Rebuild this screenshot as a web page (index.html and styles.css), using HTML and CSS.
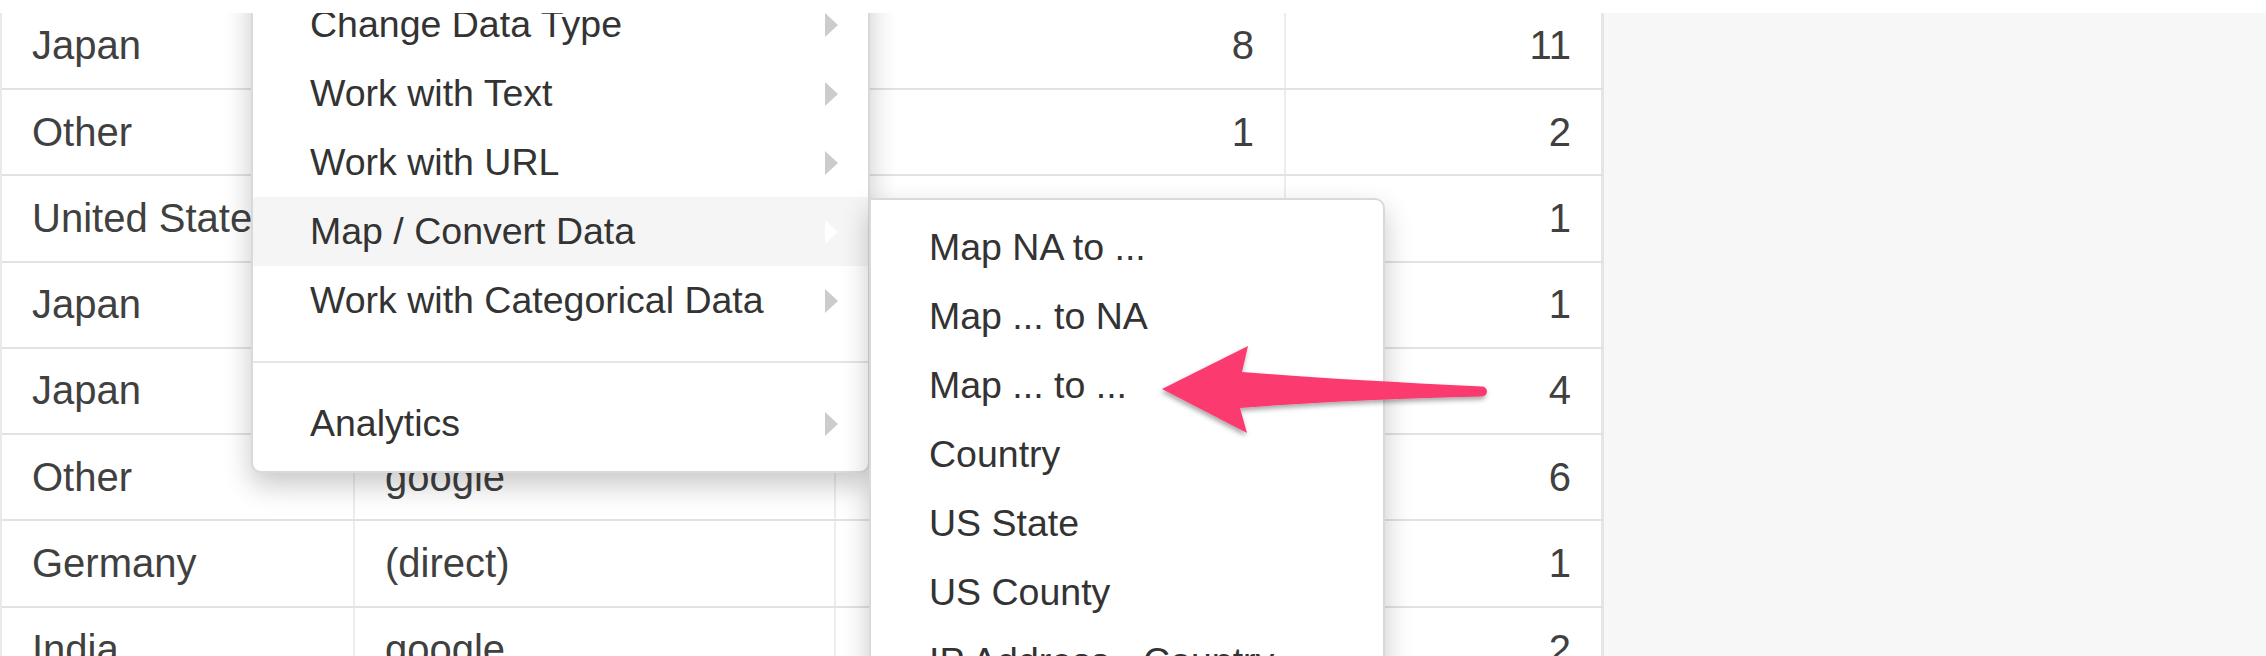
FILE: index.html
```html
<!DOCTYPE html>
<html>
<head>
<meta charset="utf-8">
<link rel="stylesheet" href="styles.css">
</head>
<body>
<div class="topbar"></div>
<div class="viewport">
  <div class="grid">
    <div class="row"><div class="cell">Japan</div><div class="cell"></div><div class="cell num">8</div><div class="cell num last">11</div></div>
    <div class="row"><div class="cell">Other</div><div class="cell"></div><div class="cell num">1</div><div class="cell num last">2</div></div>
    <div class="row"><div class="cell">United States</div><div class="cell"></div><div class="cell num"></div><div class="cell num last">1</div></div>
    <div class="row"><div class="cell">Japan</div><div class="cell"></div><div class="cell num"></div><div class="cell num last">1</div></div>
    <div class="row"><div class="cell">Japan</div><div class="cell"></div><div class="cell num"></div><div class="cell num last">4</div></div>
    <div class="row"><div class="cell">Other</div><div class="cell">google</div><div class="cell num"></div><div class="cell num last">6</div></div>
    <div class="row"><div class="cell">Germany</div><div class="cell">(direct)</div><div class="cell num"></div><div class="cell num last">1</div></div>
    <div class="row"><div class="cell">India</div><div class="cell">google</div><div class="cell num"></div><div class="cell num last">2</div></div>
  </div>

  <div class="menu main-menu">
    <div class="item"><span>Change Data Type</span><i class="caret"></i></div>
    <div class="item"><span>Work with Text</span><i class="caret"></i></div>
    <div class="item"><span>Work with URL</span><i class="caret"></i></div>
    <div class="item active"><span>Map / Convert Data</span><i class="caret"></i></div>
    <div class="item"><span>Work with Categorical Data</span><i class="caret"></i></div>
    <div class="divider"></div>
    <div class="item"><span>Analytics</span><i class="caret"></i></div>
  </div>

  <div class="menu submenu">
    <div class="item">Map NA to ...</div>
    <div class="item">Map ... to NA</div>
    <div class="item">Map ... to ...</div>
    <div class="item">Country</div>
    <div class="item">US State</div>
    <div class="item">US County</div>
    <div class="item">IP Address - Country</div>
  </div>

  <svg class="arrow" width="380" height="140" viewBox="0 0 380 140">
    <defs>
      <filter id="sh" x="-20%" y="-40%" width="140%" height="180%">
        <feDropShadow dx="-1" dy="3" stdDeviation="2.5" flood-color="#000" flood-opacity="0.35"/>
      </filter>
    </defs>
    <path filter="url(#sh)" fill="#fb3a70" d="M22 69 L108 26 L102 52 Q200 60 342 66.5 A5 5 0 0 1 342 76.5 Q200 80 100 88 L107 113 Z"/>
  </svg>
</div>
</body>
</html>
```
FILE: styles.css
```css
html, body {
  margin: 0;
  padding: 0;
  background: #ffffff;
}
body {
  font-family: "Liberation Sans", Arial, sans-serif;
  color: #333333;
}
.topbar {
  height: 13px;
  background: #ffffff;
}
.viewport {
  position: relative;
  height: 643px;
  overflow: hidden;
  background: #f7f7f7;
}
.grid {
  width: 1604px;
  margin-top: -9.25px;
  background: #ffffff;
  border-left: 2px solid #e9e9e9;
  box-sizing: border-box;
}
.row {
  display: grid;
  grid-template-columns: 353px 481px 450px 318px;
  height: 86.25px;
  border-bottom: 2px solid #e2e2e2;
  box-sizing: border-box;
}
.cell {
  display: flex;
  align-items: center;
  padding: 0 30px;
  border-right: 2px solid #ededed;
  box-sizing: border-box;
  font-size: 40px;
  color: #404040;
  white-space: nowrap;
  overflow: hidden;
}
.cell.num {
  justify-content: flex-end;
}
.cell.last {
  border-right: 3px solid #e6e6e6;
}
.menu {
  position: absolute;
  background: #ffffff;
  border: 2px solid rgba(0, 0, 0, 0.15);
  box-shadow: 0 12px 28px rgba(0, 0, 0, 0.22);
  box-sizing: border-box;
  font-size: 37.5px;
  color: #333333;
}
.main-menu {
  left: 251px;
  top: -38px;
  width: 619px;
  padding: 13px 0;
  border-radius: 10px;
  z-index: 2;
}
.main-menu .item {
  height: 69px;
  display: flex;
  align-items: center;
  justify-content: space-between;
  padding: 0 30px 0 57px;
}
.main-menu .item.active {
  background: #f5f5f5;
}
.caret {
  width: 0;
  height: 0;
  border-left: 13px solid #cccccc;
  border-top: 12px solid transparent;
  border-bottom: 12px solid transparent;
}
.item.active .caret {
  border-left-color: #ffffff;
}
.divider {
  height: 2px;
  margin: 26px 0;
  background: #e5e5e5;
}
.submenu {
  left: 869px;
  top: 185px;
  width: 516px;
  padding: 12.5px 0;
  border-radius: 0 10px 10px 10px;
  z-index: 3;
}
.submenu .item {
  height: 69px;
  display: flex;
  align-items: center;
  padding-left: 58px;
  white-space: nowrap;
}
.arrow {
  position: absolute;
  left: 1140px;
  top: 307px;
  z-index: 4;
}
```
